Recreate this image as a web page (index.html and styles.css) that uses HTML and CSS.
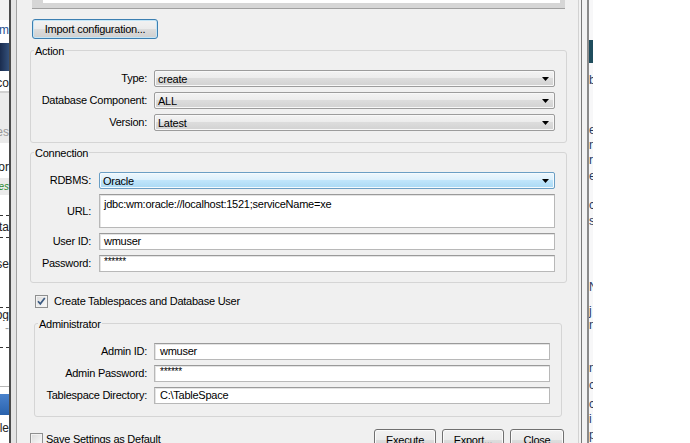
FILE: index.html
```html
<!DOCTYPE html>
<html lang="en">
<head>
    <meta charset="UTF-8">
    <title>Database Configuration</title>
    <link rel="stylesheet" href="styles.css">
</head>
<body>
    <div class="screen">
        <!-- application behind the dialog, left edge -->
        <div class="app-left">
            <div class="strip h20 pale"></div>
            <div class="strip h20 t-blue">Sum</div>
            <div class="strip h3"></div>
            <div class="strip h28 navy"></div>
            <div class="strip h3"></div>
            <div class="strip h17">Acco</div>
            <div class="strip h2 rule"></div>
            <div class="strip h28 grey"></div>
            <div class="strip h22 grey t-grey">Yes</div>
            <div class="strip h12"></div>
            <div class="strip h23">Vendor</div>
            <div class="strip h17 grey t-green">Yes</div>
            <div class="strip h20"></div>
            <div class="strip h1 dash"></div>
            <div class="strip h21">Data</div>
            <div class="strip h1 dash"></div>
            <div class="strip h16"></div>
            <div class="strip h20">Use</div>
            <div class="strip h34 dash-bottom"></div>
            <div class="strip h13">Log</div>
            <div class="strip h14 t-grey">-</div>
            <div class="strip h13 dash-bottom"></div>
            <div class="strip h39 rule-bottom"></div>
            <div class="strip h7"></div>
            <div class="strip h21 select"></div>
            <div class="strip h4"></div>
            <div class="strip h17">Table</div>
            <div class="strip h3"></div>
            <div class="strip h17">Table</div>
        </div>
        <div class="frame-left"></div>

        <div class="dialog">
            <div class="table-edge"></div>

            <button class="btn btn-focus import">Import configuration...</button>

            <!-- Action -->
            <div class="group">
                <div class="group-title">Action</div>
                <div class="form form-action">
                    <label>Type:</label>
                    <div class="combo"><span>create</span><svg class="arrow" width="7" height="4" viewBox="0 0 7 4"><path d="M0 0h7L3.5 4z"/></svg></div>
                    <label>Database Component:</label>
                    <div class="combo"><span>ALL</span><svg class="arrow" width="7" height="4" viewBox="0 0 7 4"><path d="M0 0h7L3.5 4z"/></svg></div>
                    <label>Version:</label>
                    <div class="combo"><span>Latest</span><svg class="arrow" width="7" height="4" viewBox="0 0 7 4"><path d="M0 0h7L3.5 4z"/></svg></div>
                </div>
            </div>

            <!-- Connection -->
            <div class="group connection">
                <div class="group-title">Connection</div>
                <div class="form form-connection">
                    <label>RDBMS:</label>
                    <div class="combo combo-active"><span>Oracle</span><svg class="arrow" width="7" height="4" viewBox="0 0 7 4"><path d="M0 0h7L3.5 4z"/></svg></div>
                    <label class="label-mid">URL:</label>
                    <div class="field field-area">jdbc:wm:oracle://localhost:1521;serviceName=xe</div>
                    <label>User ID:</label>
                    <div class="field">wmuser</div>
                    <label>Password:</label>
                    <div class="field field-pass">******</div>
                </div>
            </div>

            <div class="check-row create">
                <span class="checkbox"><svg width="11" height="11" viewBox="0 0 11 11"><path d="M2 5.2l2.3 2.6L8.8 2" fill="none" stroke="#3b5a82" stroke-width="1.7"/></svg></span>
                <span>Create Tablespaces and Database User</span>
            </div>

            <!-- Administrator -->
            <div class="group admin">
                <div class="group-title">Administrator</div>
                <div class="form form-admin">
                    <label>Admin ID:</label>
                    <div class="field">wmuser</div>
                    <label>Admin Password:</label>
                    <div class="field field-pass">******</div>
                    <label>Tablespace Directory:</label>
                    <div class="field">C:\TableSpace</div>
                </div>
            </div>

            <div class="footer">
                <div class="check-row">
                    <span class="checkbox"></span>
                    <span>Save Settings as Default</span>
                </div>
                <div class="footer-buttons">
                    <button class="btn btn-execute">Execute</button>
                    <button class="btn btn-export">Export...</button>
                    <button class="btn btn-close">Close</button>
                </div>
            </div>
        </div>

        <div class="frame-right"></div>
        <!-- application behind the dialog, right edge -->
        <div class="app-right">
            <div class="strip h40"></div>
            <div class="strip h23 teal"></div>
            <div class="strip h10"></div>
            <div class="strip h14">b</div>
            <div class="strip h35"></div>
            <div class="strip h15">e</div>
            <div class="strip h15">n</div>
            <div class="strip h16">r</div>
            <div class="strip h15">e</div>
            <div class="strip h14"></div>
            <div class="strip h16">c</div>
            <div class="strip h15">s</div>
            <div class="strip h51"></div>
            <div class="strip h15">N</div>
            <div class="strip h10"></div>
            <div class="strip h14">j</div>
            <div class="strip h13">n</div>
            <div class="strip h30"></div>
            <div class="strip h14">n</div>
            <div class="strip h20">c</div>
            <div class="strip h17">c</div>
            <div class="strip h14">i</div>
            <div class="strip h17">p</div>
            <div class="strip h18">c</div>
        </div>
        <div class="desk"></div>
    </div>
</body>
</html>
```

FILE: styles.css
```css
* {
    margin: 0;
    padding: 0;
    box-sizing: border-box;
}

body {
    font-family: 'Liberation Sans', Arial, sans-serif;
    font-size: 11px;
    letter-spacing: -0.25px;
    color: #000;
    background: #fff;
}

.screen {
    display: flex;
    width: 690px;
    height: 443px;
    overflow: hidden;
}

/* background application strips */
.app-left {
    width: 9px;
    flex-shrink: 0;
    display: flex;
    flex-direction: column;
    overflow: hidden;
    background: #fff;
}

.app-left .strip {
    display: flex;
    justify-content: flex-end;
    align-items: center;
    white-space: nowrap;
    overflow: hidden;
    color: #222;
    font-size: 12px;
    letter-spacing: 0;
    flex-shrink: 0;
}

.app-right {
    width: 6px;
    flex-shrink: 0;
    display: flex;
    flex-direction: column;
    overflow: hidden;
    background: #f7f7f8;
    border-left: 2px solid #8a8a8a;
}

.app-right .strip {
    display: flex;
    align-items: center;
    color: #2a3a5c;
    font-size: 12px;
    letter-spacing: 0;
    overflow: hidden;
    flex-shrink: 0;
}

.h1 { height: 1px; }
.h2 { height: 2px; }
.h3 { height: 3px; }
.h4 { height: 4px; }
.h7 { height: 7px; }
.h10 { height: 10px; }
.h12 { height: 12px; }
.h13 { height: 13px; }
.h14 { height: 14px; }
.h15 { height: 15px; }
.h16 { height: 16px; }
.h17 { height: 17px; }
.h18 { height: 18px; }
.h20 { height: 20px; }
.h21 { height: 21px; }
.h22 { height: 22px; }
.h23 { height: 23px; }
.h28 { height: 28px; }
.h30 { height: 30px; }
.h34 { height: 34px; }
.h35 { height: 35px; }
.h39 { height: 39px; }
.h40 { height: 40px; }
.h51 { height: 51px; }

.pale { background: #f1f1f1; }
.grey { background: #ebebeb; }
.navy { background: linear-gradient(90deg, #1a2c4e, #33507a); }
.teal { background: #1f4d5d; }
.select { background: linear-gradient(180deg, #4a83cc, #2a62ad); }
.rule { background: #d0d0d0; }
.rule-bottom { border-bottom: 1px solid #b8b8b8; }
.dash { border-top: 1px dashed #333; }
.dash-bottom { border-bottom: 1px dashed #333; }
.t-blue { color: #1f4f8f !important; }
.t-grey { color: #9a9a9a !important; }
.t-green { color: #2e8b2e !important; font-style: italic; font-size: 10px !important; }

.frame-left {
    width: 8px;
    flex-shrink: 0;
    background: #e4e4e4;
    border-left: 2px solid #4a4a4a;
    border-right: 1px solid #a2a2a2;
}

.frame-right {
    width: 9px;
    flex-shrink: 0;
    background: #f2f2f2;
    border-left: 1px solid #d2d2d2;
    box-shadow: inset -5px 0 0 #f2f2f2, inset -6px 0 0 #787878;
}

.desk {
    flex: 1;
    background: #fff;
}

/* dialog */
.dialog {
    width: 561px;
    flex-shrink: 0;
    background: #f0f0f0;
    padding-left: 13px;
    display: flex;
    flex-direction: column;
    align-items: flex-start;
}

.table-edge {
    width: 533px;
    height: 9px;
    margin-left: 2px;
    background: #fff;
    border-bottom: 1px solid #a0a0a0;
    box-shadow: inset 0 -5px 0 #d6d6d6, inset -5px 0 0 #d6d6d6, inset 11px 0 0 #d6d6d6;
    flex-shrink: 0;
}

.btn {
    font-family: 'Liberation Sans', Arial, sans-serif;
    font-size: 11px;
    letter-spacing: -0.25px;
    color: #000;
    height: 22px;
    border: 1px solid #707070;
    border-radius: 3px;
    background: linear-gradient(180deg, #f2f2f2 0%, #ebebeb 50%, #dddddd 51%, #cfcfcf 100%);
    box-shadow: inset 0 0 0 1px #fbfbfb;
    flex-shrink: 0;
}

.btn-focus {
    border-color: #3c7fb1;
    box-shadow: inset 0 0 0 1px #c4e5f6;
}

.import {
    width: 126px;
    height: 20px;
    margin: 10px 0 0 2px;
}

.group {
    width: 537px;
    margin-top: 11px;
    border: 1px solid #d5d5d5;
    border-radius: 3px;
    padding: 0 11px 11px 0;
    flex-shrink: 0;
}

.group.connection {
    margin-top: 9px;
    padding-bottom: 10px;
}

.group.admin {
    width: 528px;
    margin: 15px 0 0 4px;
    padding-bottom: 12px;
}

.group-title {
    width: fit-content;
    margin: -6px 0 0 3px;
    padding: 0 1px;
    line-height: 13px;
    background: #f0f0f0;
}

.form {
    display: grid;
    margin-top: 12px;
    row-gap: 5px;
    column-gap: 7px;
    grid-auto-rows: 17px;
}

.form label {
    text-align: right;
    line-height: 17px;
    white-space: nowrap;
}

.form-action {
    grid-template-columns: 116px 1fr;
}

.form-connection {
    grid-template-columns: 60px 1fr;
    grid-template-rows: 17px 34px 17px 17px;
    column-gap: 8px;
}

.form-connection .label-mid {
    align-self: center;
}

.form-admin {
    grid-template-columns: 112px 1fr;
}

.combo {
    display: flex;
    justify-content: space-between;
    align-items: center;
    height: 17px;
    padding: 0 5px 0 3px;
    border: 1px solid #9c9c9c;
    border-radius: 2px;
    background: linear-gradient(180deg, #f3f3f3 0%, #ececec 45%, #dcdcdc 50%, #d2d2d2 100%);
    box-shadow: inset 0 0 0 1px #f8f8f8;
}

.combo-active {
    border-color: #6a9ec4;
    background: linear-gradient(180deg, #eef7fd 0%, #dcf0fc 45%, #bfe5fb 50%, #a9d9f4 100%);
    box-shadow: inset 0 0 0 1px #f4fafe;
}

.arrow path {
    fill: #000;
}

.field {
    height: 17px;
    line-height: 15px;
    padding-left: 4px;
    background: #fff;
    border: 1px solid #b8b8b8;
    border-top-color: #9a9a9a;
    box-shadow: inset 1px 1px 0 #e4e4e4;
    white-space: nowrap;
    overflow: hidden;
}

.field-area {
    height: 34px;
    padding-top: 2px;
}

.form-admin .field {
    padding-left: 5px;
}

.field-pass {
    font-size: 10px;
    line-height: 12px;
}

.check-row {
    display: flex;
    align-items: center;
    gap: 6px;
    line-height: 13px;
}

.check-row.create {
    margin: 12px 0 0 5px;
}

.checkbox {
    width: 13px;
    height: 13px;
    display: flex;
    align-items: center;
    justify-content: center;
    border: 1px solid #8e8f8f;
    background: linear-gradient(135deg, #dadada, #fbfbfb);
    box-shadow: inset 0 0 0 1px #f2f2f2;
    flex-shrink: 0;
}

.footer {
    display: flex;
    justify-content: space-between;
    align-items: flex-start;
    width: 534px;
    margin-top: 12px;
}

.footer .check-row {
    margin-top: 4px;
    gap: 3px;
}

.footer-buttons {
    display: flex;
    gap: 6px;
}

.btn-execute,
.btn-export {
    width: 62px;
}

.btn-close {
    width: 54px;
}
```
